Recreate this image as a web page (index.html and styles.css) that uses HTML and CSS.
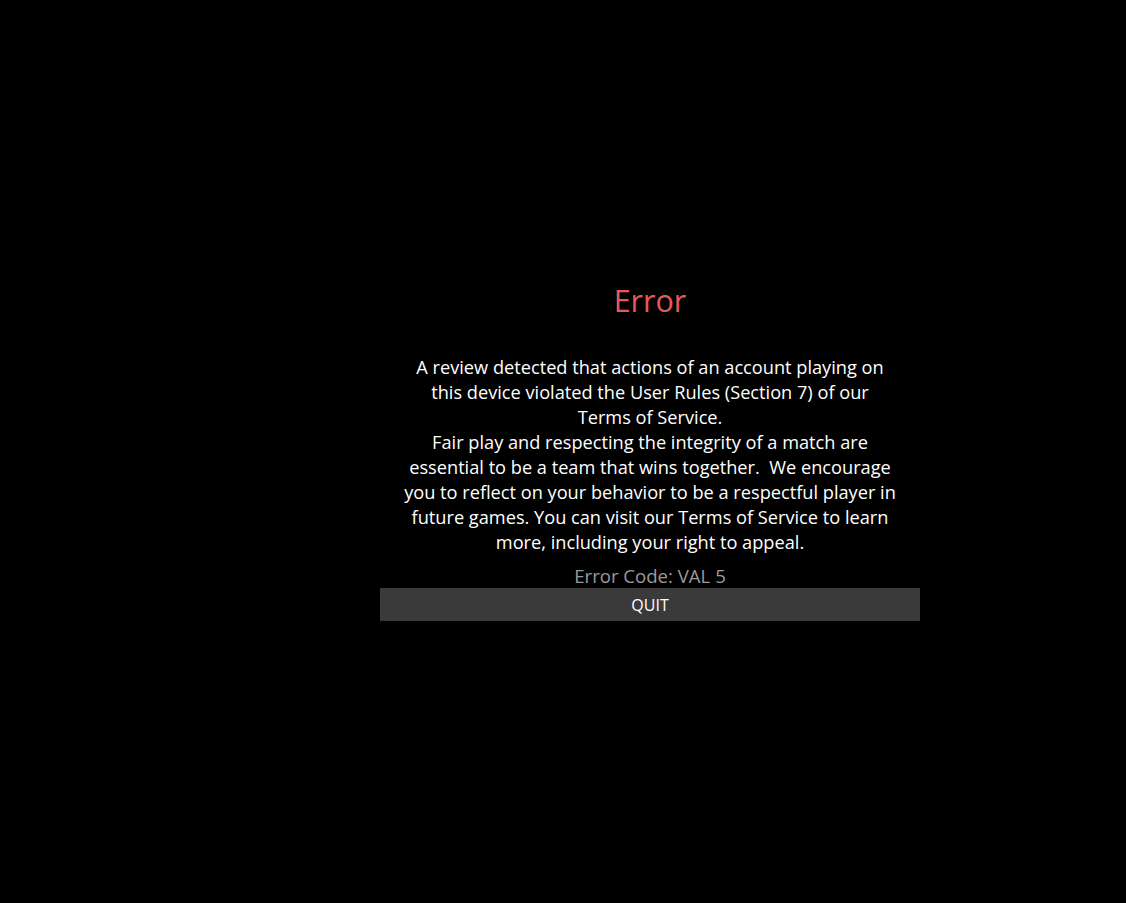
FILE: index.html
```html
<!DOCTYPE html>
<html>
<head>
<meta charset="utf-8">
<link rel="stylesheet" href="styles.css">
</head>
<body>
<div class="dialog">
  <h1 class="title">Error</h1>
  <p class="message">A review detected that actions of an account playing on this device violated the User Rules (Section 7) of our Terms of Service.<br>Fair play and respecting the integrity of a match are essential to be a team that wins together.&nbsp; We encourage you to reflect on your behavior to be a respectful player in future games. You can visit our Terms of Service to learn more, including your right to appeal.</p>
  <div class="code">Error Code: VAL 5</div>
  <button class="quit">QUIT</button>
</div>
</body>
</html>
```
FILE: styles.css
```css
html, body {
  margin: 0;
  padding: 0;
  background: #000;
  width: 1126px;
  height: 903px;
  overflow: hidden;
}
body {
  font-family: "Open Sans", "DejaVu Sans", sans-serif;
  color: #fff;
}
.dialog {
  width: 540px;
  margin-left: 380px;
  padding-top: 280px;
  display: flex;
  flex-direction: column;
  align-items: center;
}
.title {
  margin: 0;
  font-size: 30.5px;
  font-weight: 400;
  line-height: 40px;
  color: #e8595a;
}
.message {
  width: 493px;
  margin: 35px 0 0;
  font-size: 18.2px;
  line-height: 25px;
  text-align: center;
}
.code {
  margin-top: 10px;
  font-size: 18.6px;
  line-height: 22px;
  color: #9a9a9a;
}
.quit {
  margin-top: 1px;
  width: 540px;
  height: 33px;
  border: 0;
  background: #3a3a3a;
  color: #fff;
  font-family: inherit;
  font-size: 16px;
  padding: 0;
}
```
